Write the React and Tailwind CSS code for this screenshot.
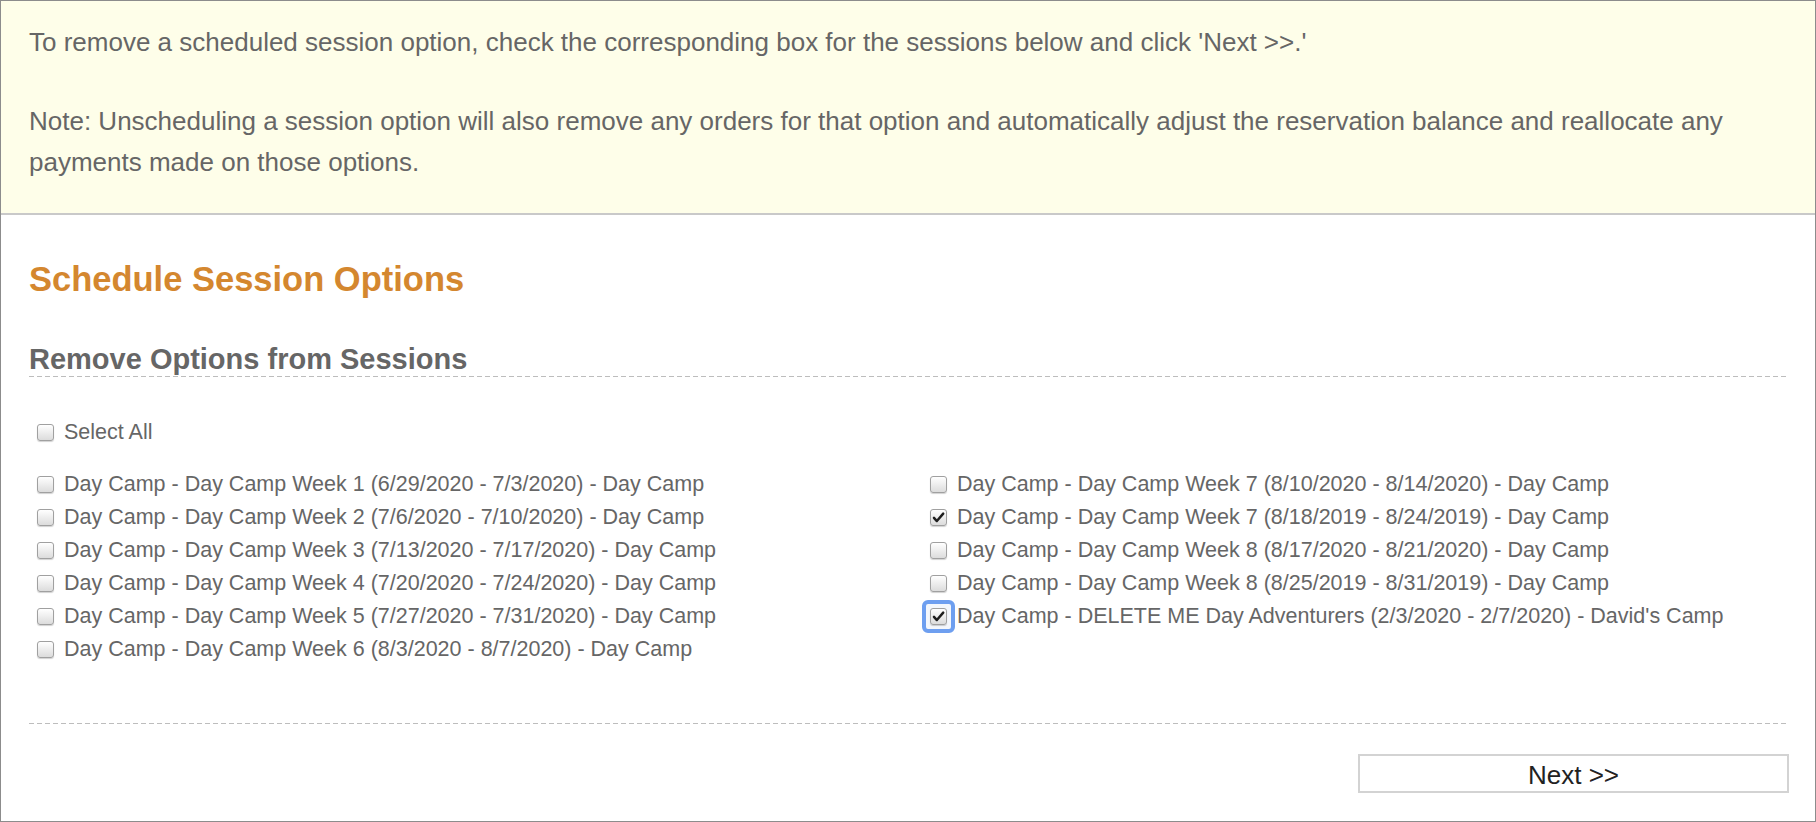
import React from "react";

function Box({ checked = false, focused = false }) {
  const box = (
    <span className="flex h-[17px] w-[17px] shrink-0 items-center justify-center rounded-[3px] border border-[#a0a0a0] bg-gradient-to-b from-white to-[#dcdcdc] shadow-[0_1px_1px_rgba(0,0,0,0.18)]">
      {checked && (
        <svg viewBox="0 0 16 16" className="h-[13px] w-[13px]">
          <path d="M2.4 8.4 L6 12.4 L13.8 3.2" fill="none" stroke="#1e1e1e" strokeWidth="3" strokeLinecap="round" strokeLinejoin="round" />
        </svg>
      )}
    </span>
  );
  if (focused) {
    return (
      <span className="-ml-[8px] mr-[1px] flex h-[33px] w-[33px] shrink-0 items-center justify-center rounded-[6px] border-[4px] border-[#6e9ff0] bg-[#f4f7fc]">
        {box}
      </span>
    );
  }
  return box;
}

function Row({ label, checked, focused }) {
  return (
    <div className="flex h-[33px] items-center pl-[8px]">
      <Box checked={checked} focused={focused} />
      <span className={focused ? "ml-[1px]" : "ml-[10px]"}>{label}</span>
    </div>
  );
}

const left = [
  "Day Camp - Day Camp Week 1 (6/29/2020 - 7/3/2020) - Day Camp",
  "Day Camp - Day Camp Week 2 (7/6/2020 - 7/10/2020) - Day Camp",
  "Day Camp - Day Camp Week 3 (7/13/2020 - 7/17/2020) - Day Camp",
  "Day Camp - Day Camp Week 4 (7/20/2020 - 7/24/2020) - Day Camp",
  "Day Camp - Day Camp Week 5 (7/27/2020 - 7/31/2020) - Day Camp",
  "Day Camp - Day Camp Week 6 (8/3/2020 - 8/7/2020) - Day Camp",
];

const right = [
  { label: "Day Camp - Day Camp Week 7 (8/10/2020 - 8/14/2020) - Day Camp" },
  { label: "Day Camp - Day Camp Week 7 (8/18/2019 - 8/24/2019) - Day Camp", checked: true },
  { label: "Day Camp - Day Camp Week 8 (8/17/2020 - 8/21/2020) - Day Camp" },
  { label: "Day Camp - Day Camp Week 8 (8/25/2019 - 8/31/2019) - Day Camp" },
  { label: "Day Camp - DELETE ME Day Adventurers (2/3/2020 - 2/7/2020) - David's Camp", checked: true, focused: true },
];

const dashed =
  "h-px w-full bg-[repeating-linear-gradient(to_right,#bdbdbd_0,#bdbdbd_5px,transparent_5px,transparent_8px)]";

export default function App() {
  return (
    <div className="box-border h-[822px] w-[1816px] overflow-hidden border border-[#8c8c8c] bg-white font-['Liberation_Sans',Arial,sans-serif] text-[#666666]">
      <div className="border-b-2 border-[#c9c9c9] bg-[#fefee9] pb-[29px] pl-[28px] pr-[26px] pt-[21px] text-[26px] leading-[41.5px]">
        <p>To remove a scheduled session option, check the corresponding box for the sessions below and click 'Next &gt;&gt;.'</p>
        <p className="mt-[37px]">
          Note: Unscheduling a session option will also remove any orders for that option and automatically adjust the reservation balance and reallocate any payments made on those options.
        </p>
      </div>
      <div className="pl-[28px] pr-[26px]">
        <h1 className="mt-[44px] text-[34.5px] font-bold leading-[40px] text-[#d4872f]">Schedule Session Options</h1>
        <h2 className="mt-[43px] text-[29px] font-bold leading-[34px] text-[#666666]">Remove Options from Sessions</h2>
        <div className={dashed} />
        <div className="mt-[39px] text-[21.5px]">
          <Row label="Select All" />
        </div>
        <div className="mt-[19px] grid grid-cols-[893px_1fr] text-[21.5px]">
          <div className="flex flex-col">
            {left.map((l) => (
              <Row key={l} label={l} />
            ))}
          </div>
          <div className="flex flex-col">
            {right.map((r) => (
              <Row key={r.label} label={r.label} checked={r.checked} focused={r.focused} />
            ))}
          </div>
        </div>
        <div className={"mt-[57px] " + dashed} />
        <div className="mt-[30px] flex justify-end">
          <button className="h-[39px] w-[431px] border-2 border-[#d3d3d3] bg-white text-[26px] text-[#222222]">
            Next &gt;&gt;
          </button>
        </div>
      </div>
    </div>
  );
}
